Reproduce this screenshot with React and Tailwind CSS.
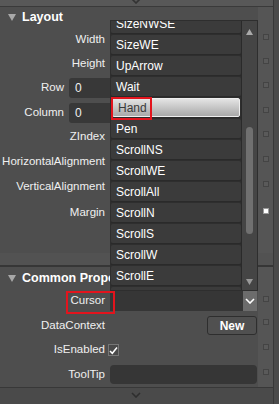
import React from 'react';

const cursors = ['SizeNWSE', 'SizeWE', 'UpArrow', 'Wait', 'Hand', 'Pen', 'ScrollNS', 'ScrollWE', 'ScrollAll', 'ScrollN', 'ScrollS', 'ScrollW', 'ScrollE', 'ScrollNE'];

function Marker({ on = false, offset = 'mt-[-6px]' }) {
  return (
    <div className="flex w-[15px] shrink-0 items-center justify-center self-stretch bg-[#555555]">
      <span className={`h-[6px] w-[6px] border ${offset} ${on ? 'border-[#9a9a9a] bg-white' : 'border-[#444] bg-[#5a5a5a]'}`} />
    </div>
  );
}

function Row({ label, h, children, on, offset, labelW = 'w-[107px]' }) {
  return (
    <div className="flex" style={{ height: h }}>
      <div className={`flex ${labelW} shrink-0 items-center justify-end pr-[2px]`}>{label}</div>
      <div className="flex flex-1 items-center pl-[3px] pr-[1px]">{children}</div>
      <Marker on={on} offset={offset} />
    </div>
  );
}

function Header({ title, h }) {
  return (
    <div className="flex" style={{ height: h }}>
      <div className="flex flex-1 items-center gap-[6px] pl-[8px] text-[12.5px] font-bold text-white">
        <svg width="8" height="7" viewBox="0 0 8 7"><path d="M0 0h8L4 7z" fill="#a8a8a8" /></svg>
        <span className="whitespace-nowrap">{title}</span>
      </div>
      <div className="w-[15px] bg-[#555555]" />
    </div>
  );
}

function Chevron({ color }) {
  return (
    <svg width="10" height="6" viewBox="0 0 10 6"><path d="M1 1l4 4 4-4" stroke={color} strokeWidth="1.6" fill="none" /></svg>
  );
}

export default function App() {
  return (
    <div className="relative flex h-[404px] w-[279px] overflow-hidden bg-[#4e4e4e] font-['Liberation_Sans',Arial,sans-serif] text-[11.5px] text-[#f0f0f0]">
      <div className="flex flex-1 flex-col">
        <div className="flex h-[7px] justify-center border-b border-[#3a3a3a] bg-[#585858]">
          <div className="-mt-[2px] ml-[-2px]"><Chevron color="#333" /></div>
        </div>
        <Header title="Layout" h={21} />
        <Row label="Width" h={24} />
        <Row label="Height" h={24} />
        <Row label="Row" h={24} labelW="w-[66px]">
          <div className="flex h-[20px] w-full items-center rounded-[3px] bg-[#383838] pl-[6px] text-[12px]">0</div>
        </Row>
        <Row label="Column" h={26} labelW="w-[66px]">
          <div className="flex h-[20px] w-full items-center rounded-[3px] bg-[#383838] pl-[6px] text-[12px]">0</div>
        </Row>
        <Row label="ZIndex" h={22} />
        <Row label="HorizontalAlignment" h={28} />
        <Row label="VerticalAlignment" h={22} />
        <Row label="Margin" h={30} on offset="mt-[-4px]" />
        <div className="flex h-[25px]">
          <div className="flex-1" />
          <div className="w-[15px] bg-[#555555]" />
        </div>
        <div className="flex h-[14px] border-b-2 border-[#363636] bg-[#525252]" />
        <Header title="Common Properties" h={22} />
        <Row label="Cursor" h={24} offset="mt-[-5px]">
          <div className="flex h-[20px] w-full items-center justify-end bg-[#363636]">
            <div className="flex h-[20px] w-[14px] items-center justify-center bg-[#6c6c6c]"><Chevron color="#fff" /></div>
          </div>
        </Row>
        <Row label="DataContext" h={25} offset="mt-[-7px]">
          <div className="flex w-full justify-end">
            <div className="flex h-[19px] w-[50px] items-center justify-center rounded-[3px] border border-[#2e2e2e] bg-[#505050] text-[12px] font-bold text-white">New</div>
          </div>
        </Row>
        <Row label="IsEnabled" h={24} offset="mt-[-6px]">
          <div className="-ml-[2px] flex h-[12px] w-[11px] items-center justify-center border border-[#777] bg-[#4a4a4a]">
            <svg width="9" height="9" viewBox="0 0 9 9"><path d="M1 5l2.3 2.3L8 1.5" stroke="#fff" strokeWidth="1.5" fill="none" /></svg>
          </div>
        </Row>
        <Row label="ToolTip" h={25} offset="mt-[-5px]">
          <div className="h-[19px] w-full rounded-[4px] bg-[#363636]" />
        </Row>
        <div className="flex flex-1 justify-center border-t border-[#383838] bg-[#4a4a4a] pt-[4px]">
          <div className="ml-[-2px]"><Chevron color="#2e2e2e" /></div>
        </div>
      </div>
      <div className="w-[6px] border-l border-[#383838] bg-[#4a4a4a]" />

      <div className="absolute left-[110px] top-[20px] flex h-[271px] w-[148px] border border-[#2e2e2e] bg-[#2e2e2e]">
        <div className="relative flex-1 overflow-hidden">
          <div className="absolute left-0 right-0 top-[-8px] flex flex-col">
            {cursors.map((c) => (
              <div key={c} className="h-[21px] border-b border-[#2a2a2a] pt-px">
                {c === 'Hand' ? (
                  <div className="relative mx-px flex h-[19px] items-center rounded-[2px] border border-[#eeeeee] bg-gradient-to-b from-[#e4e4e4] to-[#a9a9a9] pl-[5px] text-[12px] text-[#3a3a3a]">
                    {c}
                    <div className="absolute left-[-2px] top-[-2px] h-[23px] w-[41px] border-2 border-[#e3141d]" />
                  </div>
                ) : (
                  <div className="flex h-[19px] items-center rounded-[2px] bg-[#3b3b3b] pl-[5px] text-[12px] text-white">{c}</div>
                )}
              </div>
            ))}
          </div>
        </div>
        <div className="relative w-[16px] border-l border-[#2a2a2a] bg-[#454545]">
          <svg className="absolute left-[4px] top-[8px]" width="7" height="6" viewBox="0 0 7 6"><path d="M3.5 0L7 6H0z" fill="#aaa" /></svg>
          <div className="absolute left-[4px] top-[106px] h-[107px] w-[7px] rounded-full bg-[#707070]" />
          <svg className="absolute left-[4px] top-[258px]" width="7" height="6" viewBox="0 0 7 6"><path d="M0 0h7L3.5 6z" fill="#999" /></svg>
        </div>
      </div>

      <div className="absolute left-[66px] top-[291px] h-[23px] w-[49px] border-2 border-[#e3141d]" />
    </div>
  );
}
